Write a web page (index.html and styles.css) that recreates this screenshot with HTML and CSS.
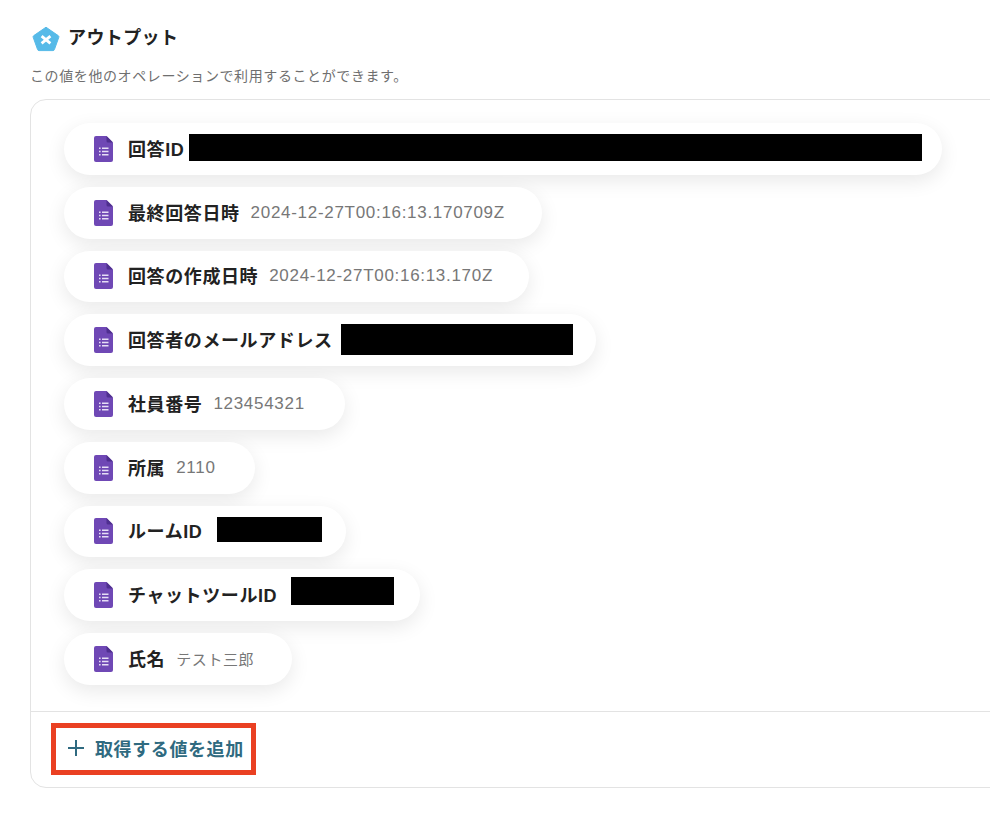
FILE: index.html
```html
<!DOCTYPE html>
<html lang="ja">
<head>
    <meta charset="UTF-8">
    <title>アウトプット</title>
    <link rel="stylesheet" href="styles.css">
</head>
<body>
    <svg class="defs" width="0" height="0">
        <symbol id="forms" viewBox="0 0 19 26">
            <path d="M2 0H12.5L19 6.5V24a2 2 0 0 1-2 2H2a2 2 0 0 1-2-2V2a2 2 0 0 1 2-2Z" fill="#6f48b5"/>
            <path d="M12.5 0L19 6.5H14a1.5 1.5 0 0 1-1.5-1.5Z" fill="#4f2f8f"/>
            <path d="M5 11.5h1.6v1.6H5ZM8 11.5h6.5v1.6H8ZM5 14.7h1.6v1.6H5ZM8 14.7h6.5v1.6H8ZM5 17.9h1.6v1.6H5ZM8 17.9h6.5v1.6H8Z" fill="#e6def5"/>
        </symbol>
    </svg>

    <div class="title">
        <svg class="logo" width="28" height="26" viewBox="0 0 28 26">
            <path d="M14 1.2L26.2 9.6a1.5 1.5 0 0 1 .6 1.7L22.4 23.6a1.5 1.5 0 0 1-1.4 1H7a1.5 1.5 0 0 1-1.4-1L1.2 11.3a1.5 1.5 0 0 1 .6-1.7Z" fill="#56bae8" stroke="#56bae8" stroke-linejoin="round"/>
            <path d="M9.6 10.2L18.4 17.4M18.4 10.2L9.6 17.4" stroke="#fff" stroke-width="2.8" fill="none"/>
        </svg>
        <h1>アウトプット</h1>
    </div>
    <p class="desc">この値を他のオペレーションで利用することができます。</p>

    <div class="panel">
        <div class="list">
            <div class="pill w1">
                <svg class="ico"><use href="#forms"/></svg>
                <b>回答ID</b>
                <span class="mask m1"></span>
            </div>
            <div class="pill w2">
                <svg class="ico"><use href="#forms"/></svg>
                <b>最終回答日時</b>
                <span class="val">2024-12-27T00:16:13.170709Z</span>
            </div>
            <div class="pill w3">
                <svg class="ico"><use href="#forms"/></svg>
                <b>回答の作成日時</b>
                <span class="val">2024-12-27T00:16:13.170Z</span>
            </div>
            <div class="pill w4">
                <svg class="ico"><use href="#forms"/></svg>
                <b>回答者のメールアドレス</b>
                <span class="mask m4"></span>
            </div>
            <div class="pill w5">
                <svg class="ico"><use href="#forms"/></svg>
                <b>社員番号</b>
                <span class="val">123454321</span>
            </div>
            <div class="pill w6">
                <svg class="ico"><use href="#forms"/></svg>
                <b>所属</b>
                <span class="val">2110</span>
            </div>
            <div class="pill w7">
                <svg class="ico"><use href="#forms"/></svg>
                <b>ルームID</b>
                <span class="mask m7"></span>
            </div>
            <div class="pill w8">
                <svg class="ico"><use href="#forms"/></svg>
                <b>チャットツールID</b>
                <span class="mask m8"></span>
            </div>
            <div class="pill w9">
                <svg class="ico"><use href="#forms"/></svg>
                <b>氏名</b>
                <span class="val small">テスト三郎</span>
            </div>
        </div>
        <div class="foot">
            <div class="add">
                <svg class="plus" width="18" height="18" viewBox="0 0 18 18">
                    <path d="M9 1V17M1 9H17" stroke="#2f6a80" stroke-width="2" fill="none"/>
                </svg>
                <span>取得する値を追加</span>
            </div>
        </div>
    </div>
</body>
</html>
```

FILE: styles.css
```css
html, body {
    margin: 0;
    padding: 0;
    height: 822px;
    overflow: hidden;
    background: #fff;
}
body {
    padding: 25px 0 0 30px;
    box-sizing: border-box;
    font-family: "Liberation Sans", "Noto Sans CJK JP", sans-serif;
    color: #222;
}
.defs {
    display: none;
}
.title {
    display: flex;
    align-items: center;
    gap: 8px;
    height: 28px;
    padding-left: 2px;
}
.logo {
    margin-top: -1px;
}
.title h1 {
    margin: 0 0 2px;
    font-size: 18px;
    line-height: 28px;
    font-weight: 700;
    letter-spacing: 0.4px;
}
.desc {
    margin: 13px 0 0;
    font-size: 14px;
    line-height: 20px;
    letter-spacing: 0.6px;
    color: #6f6f6f;
}
.panel {
    width: 1000px;
    height: 689px;
    margin-top: 13px;
    border: 1px solid #e3e3e3;
    border-radius: 16px;
    box-sizing: border-box;
    display: flex;
    flex-direction: column;
}
.list {
    height: 611px;
    padding: 23px 0 0 33px;
    box-sizing: border-box;
    display: flex;
    flex-direction: column;
    gap: 12px;
}
.pill {
    height: 51.75px;
    flex: none;
    display: flex;
    align-items: center;
    padding-left: 30px;
    box-sizing: border-box;
    border-radius: 26px;
    background: #fff;
    box-shadow: 0 6px 20px rgba(0, 0, 0, 0.09);
}
.w1 { width: 878px; }
.w2 { width: 478px; }
.w3 { width: 465px; }
.w4 { width: 532px; }
.w5 { width: 281px; }
.w6 { width: 191px; }
.w7 { width: 282px; }
.w8 { width: 356px; }
.w9 { width: 228px; }
.ico {
    width: 19px;
    height: 26px;
    flex: none;
    margin-right: 15px;
}
.pill b {
    margin-bottom: 2px;
    font-size: 18px;
    font-weight: 700;
    letter-spacing: 0.6px;
    white-space: nowrap;
}
.val {
    margin-left: 11px;
    font-size: 17px;
    letter-spacing: 0.7px;
    color: #777;
    white-space: nowrap;
}
.small {
    font-size: 15px;
    letter-spacing: 0.6px;
}
.mask {
    display: block;
    background: #000;
    flex: none;
}
.m1 { width: 733px; height: 27px; margin: 0 0 2px 5px; }
.m4 { width: 232px; height: 31px; margin: 0 0 2px 8px; }
.m7 { width: 105px; height: 25px; margin: 0 0 4px 15px; }
.m8 { width: 103px; height: 28px; margin: 0 0 8px 14px; }
.foot {
    flex: 1;
    border-top: 1px solid #e3e3e3;
    padding: 11px 0 0 20px;
}
.add {
    width: 205px;
    height: 52px;
    box-sizing: border-box;
    border: 5px solid #ea4022;
    display: flex;
    align-items: center;
    padding: 0 0 2px 11px;
    gap: 10px;
    color: #2f6a80;
    font-size: 18px;
    letter-spacing: 0.6px;
    font-weight: 700;
}
```
